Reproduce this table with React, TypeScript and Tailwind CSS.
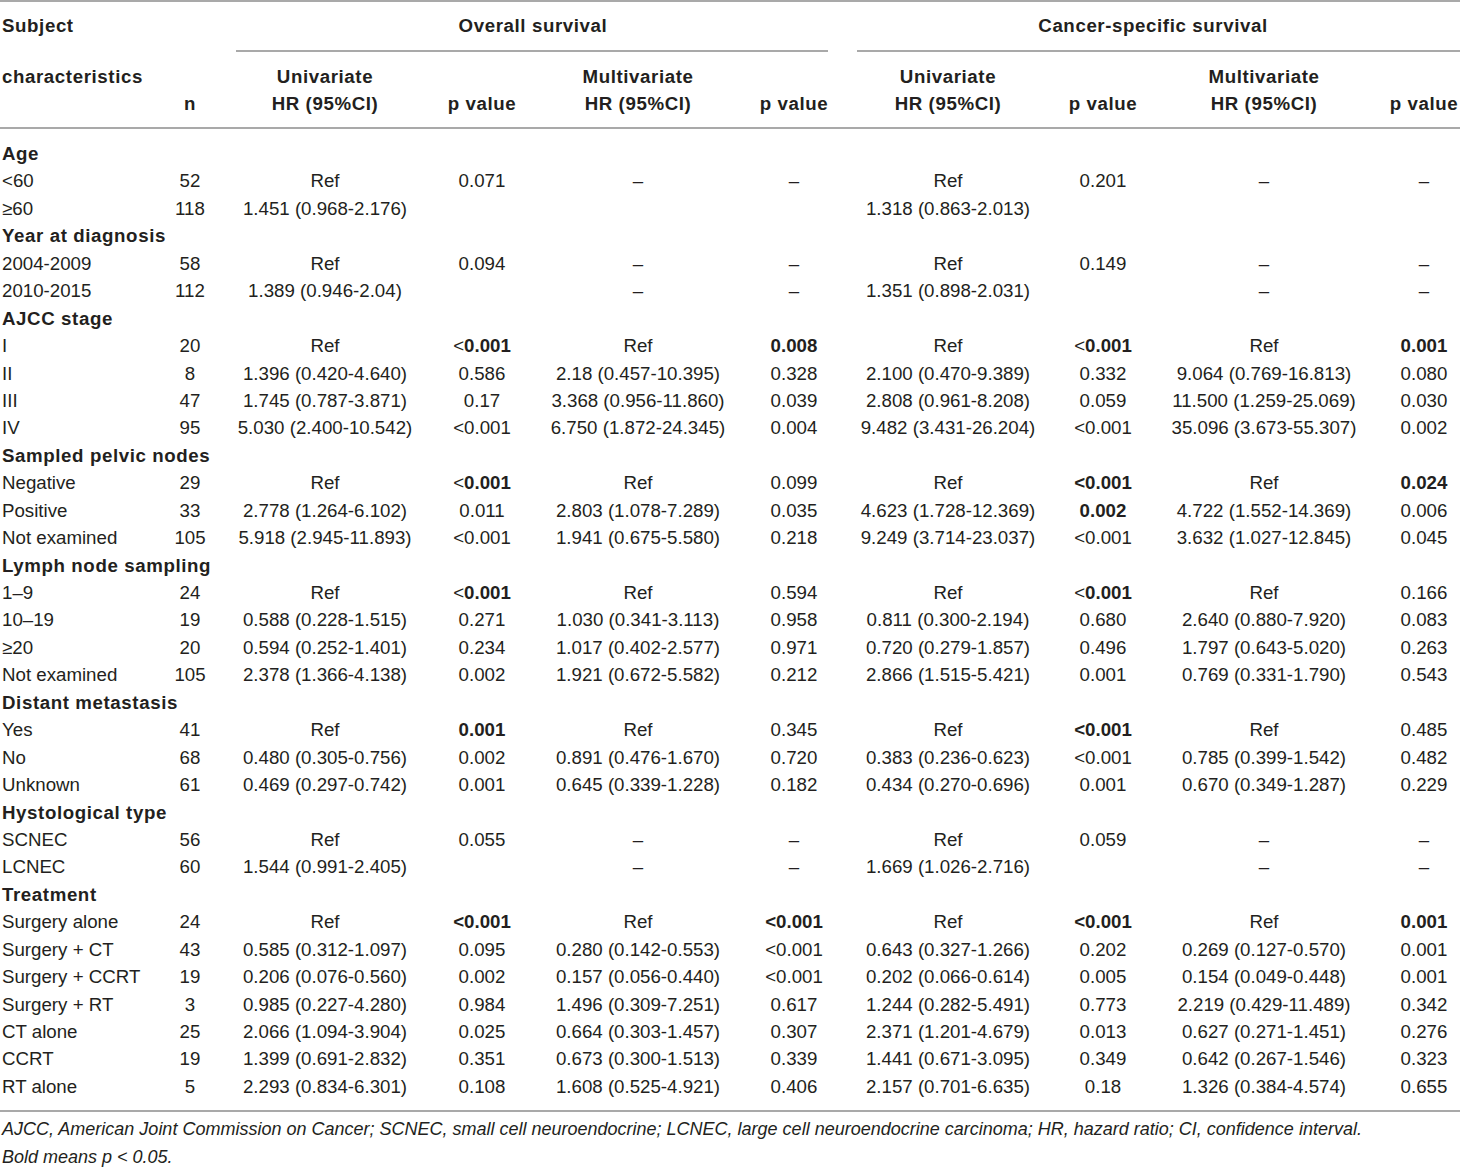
import React from "react";

// column widths: subject, n, OS uni, p, OS multi, p, CSS uni, p, CSS multi, p
const grid =
  "grid grid-cols-[160px_60px_210px_104px_208px_104px_204px_106px_216px_88px]";

type Row = string[] | string;

// "!x" -> whole cell bold, "<!x" -> "<" plain + rest bold
const rows: Row[] = [
  "Age",
  ["<60", "52", "Ref", "0.071", "–", "–", "Ref", "0.201", "–", "–"],
  ["≥60", "118", "1.451 (0.968-2.176)", "", "", "", "1.318 (0.863-2.013)", "", "", ""],
  "Year at diagnosis",
  ["2004-2009", "58", "Ref", "0.094", "–", "–", "Ref", "0.149", "–", "–"],
  ["2010-2015", "112", "1.389 (0.946-2.04)", "", "–", "–", "1.351 (0.898-2.031)", "", "–", "–"],
  "AJCC stage",
  ["I", "20", "Ref", "<!0.001", "Ref", "!0.008", "Ref", "<!0.001", "Ref", "!0.001"],
  ["II", "8", "1.396 (0.420-4.640)", "0.586", "2.18 (0.457-10.395)", "0.328", "2.100 (0.470-9.389)", "0.332", "9.064 (0.769-16.813)", "0.080"],
  ["III", "47", "1.745 (0.787-3.871)", "0.17", "3.368 (0.956-11.860)", "0.039", "2.808 (0.961-8.208)", "0.059", "11.500 (1.259-25.069)", "0.030"],
  ["IV", "95", "5.030 (2.400-10.542)", "<0.001", "6.750 (1.872-24.345)", "0.004", "9.482 (3.431-26.204)", "<0.001", "35.096 (3.673-55.307)", "0.002"],
  "Sampled pelvic nodes",
  ["Negative", "29", "Ref", "<!0.001", "Ref", "0.099", "Ref", "!<0.001", "Ref", "!0.024"],
  ["Positive", "33", "2.778 (1.264-6.102)", "0.011", "2.803 (1.078-7.289)", "0.035", "4.623 (1.728-12.369)", "!0.002", "4.722 (1.552-14.369)", "0.006"],
  ["Not examined", "105", "5.918 (2.945-11.893)", "<0.001", "1.941 (0.675-5.580)", "0.218", "9.249 (3.714-23.037)", "<0.001", "3.632 (1.027-12.845)", "0.045"],
  "Lymph node sampling",
  ["1–9", "24", "Ref", "<!0.001", "Ref", "0.594", "Ref", "<!0.001", "Ref", "0.166"],
  ["10–19", "19", "0.588 (0.228-1.515)", "0.271", "1.030 (0.341-3.113)", "0.958", "0.811 (0.300-2.194)", "0.680", "2.640 (0.880-7.920)", "0.083"],
  ["≥20", "20", "0.594 (0.252-1.401)", "0.234", "1.017 (0.402-2.577)", "0.971", "0.720 (0.279-1.857)", "0.496", "1.797 (0.643-5.020)", "0.263"],
  ["Not examined", "105", "2.378 (1.366-4.138)", "0.002", "1.921 (0.672-5.582)", "0.212", "2.866 (1.515-5.421)", "0.001", "0.769 (0.331-1.790)", "0.543"],
  "Distant metastasis",
  ["Yes", "41", "Ref", "!0.001", "Ref", "0.345", "Ref", "!<0.001", "Ref", "0.485"],
  ["No", "68", "0.480 (0.305-0.756)", "0.002", "0.891 (0.476-1.670)", "0.720", "0.383 (0.236-0.623)", "<0.001", "0.785 (0.399-1.542)", "0.482"],
  ["Unknown", "61", "0.469 (0.297-0.742)", "0.001", "0.645 (0.339-1.228)", "0.182", "0.434 (0.270-0.696)", "0.001", "0.670 (0.349-1.287)", "0.229"],
  "Hystological type",
  ["SCNEC", "56", "Ref", "0.055", "–", "–", "Ref", "0.059", "–", "–"],
  ["LCNEC", "60", "1.544 (0.991-2.405)", "", "–", "–", "1.669 (1.026-2.716)", "", "–", "–"],
  "Treatment",
  ["Surgery alone", "24", "Ref", "!<0.001", "Ref", "!<0.001", "Ref", "!<0.001", "Ref", "!0.001"],
  ["Surgery + CT", "43", "0.585 (0.312-1.097)", "0.095", "0.280 (0.142-0.553)", "<0.001", "0.643 (0.327-1.266)", "0.202", "0.269 (0.127-0.570)", "0.001"],
  ["Surgery + CCRT", "19", "0.206 (0.076-0.560)", "0.002", "0.157 (0.056-0.440)", "<0.001", "0.202 (0.066-0.614)", "0.005", "0.154 (0.049-0.448)", "0.001"],
  ["Surgery + RT", "3", "0.985 (0.227-4.280)", "0.984", "1.496 (0.309-7.251)", "0.617", "1.244 (0.282-5.491)", "0.773", "2.219 (0.429-11.489)", "0.342"],
  ["CT alone", "25", "2.066 (1.094-3.904)", "0.025", "0.664 (0.303-1.457)", "0.307", "2.371 (1.201-4.679)", "0.013", "0.627 (0.271-1.451)", "0.276"],
  ["CCRT", "19", "1.399 (0.691-2.832)", "0.351", "0.673 (0.300-1.513)", "0.339", "1.441 (0.671-3.095)", "0.349", "0.642 (0.267-1.546)", "0.323"],
  ["RT alone", "5", "2.293 (0.834-6.301)", "0.108", "1.608 (0.525-4.921)", "0.406", "2.157 (0.701-6.635)", "0.18", "1.326 (0.384-4.574)", "0.655"],
];

function Val({ v }: { v: string }) {
  if (v.startsWith("<!"))
    return (
      <>
        {"<"}
        <b className="font-bold">{v.slice(2)}</b>
      </>
    );
  if (v.startsWith("!")) return <b className="font-bold">{v.slice(1)}</b>;
  return <>{v}</>;
}

const Line = () => <div className="h-[2px] bg-[#a9a9a9]" />;

const headCols = [
  ["characteristics", ""],
  ["", "n"],
  ["Univariate", "HR (95%CI)"],
  ["", "p value"],
  ["Multivariate", "HR (95%CI)"],
  ["", "p value"],
  ["Univariate", "HR (95%CI)"],
  ["", "p value"],
  ["Multivariate", "HR (95%CI)"],
  ["", "p value"],
];

export default function App() {
  return (
    <div className="w-[1460px] bg-white font-['Liberation_Sans',Arial,sans-serif] text-[18.7px] leading-[27.44px] text-[#231f20]">
      <Line />

      {/* group header */}
      <div className={`${grid} h-[48px] items-center font-bold tracking-[0.6px]`}>
        <div className="pl-[2px]">Subject</div>
        <div />
        <div className="col-span-4 text-center">Overall survival</div>
        <div className="col-span-4 text-center">Cancer-specific survival</div>
      </div>
      <div className={`${grid} h-[2px]`}>
        <div className="col-start-3 col-span-4 ml-[16px] mr-[18px] bg-[#a9a9a9]" />
        <div className="col-span-4 ml-[11px] bg-[#a9a9a9]" />
      </div>

      {/* column header */}
      <div className={`${grid} h-[75px] pt-[11px] font-bold tracking-[0.6px]`}>
        {headCols.map((c, i) => (
          <div
            key={i}
            className={
              i === 0 ? "pl-[2px]" : i === 9 ? "pl-[16px] text-center" : "text-center"
            }
          >
            <div className="h-[27.44px] whitespace-nowrap">{c[0]}</div>
            <div className="h-[27.44px] whitespace-nowrap">{c[1]}</div>
          </div>
        ))}
      </div>
      <Line />

      {/* body */}
      <div className="pt-[11px] pb-[10px]">
        {rows.map((r, i) =>
          typeof r === "string" ? (
            <div key={i} className="h-[27.44px] pl-[2px] font-bold tracking-[0.6px] whitespace-nowrap">
              {r}
            </div>
          ) : (
            <div key={i} className={`${grid} h-[27.44px] whitespace-nowrap`}>
              {r.map((v, j) => (
                <div
                  key={j}
                  className={
                    j === 0 ? "pl-[2px]" : j === 9 ? "pl-[16px] text-center" : "text-center"
                  }
                >
                  <Val v={v} />
                </div>
              ))}
            </div>
          )
        )}
      </div>
      <Line />

      {/* footnote */}
      <div className="pt-[4px] pl-[2px] italic text-[18px]">
        <p>
          AJCC, American Joint Commission on Cancer; SCNEC, small cell neuroendocrine; LCNEC, large
          cell neuroendocrine carcinoma; HR, hazard ratio; CI, confidence interval.
        </p>
        <p>Bold means p &lt; 0.05.</p>
      </div>
    </div>
  );
}
